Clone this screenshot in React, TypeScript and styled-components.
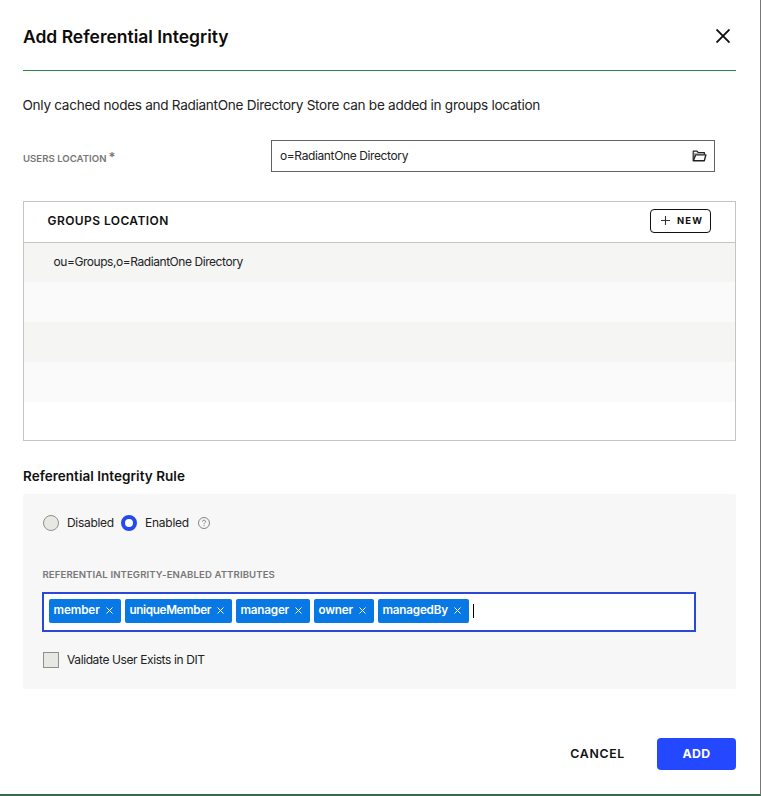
import React from 'react';
import styled, { createGlobalStyle } from 'styled-components';

const GlobalStyle = createGlobalStyle`
  *, *::before, *::after { box-sizing: border-box; }
  html, body { margin: 0; background: #fff; overflow: hidden; }
  button { font-family: inherit; padding: 0; margin: 0; background: none; border: 0; color: inherit; }
`;

const Dialog = styled.main`
  width: 761px;
  height: 796px;
  padding: 0 24px 0 23px;
  display: flex;
  flex-direction: column;
  background: #fff;
  border-right: 1px solid #777;
  border-bottom: 2px solid #356b48;
  font-family: Inter, 'Liberation Sans', sans-serif;
  color: #222;
  white-space: nowrap;
`;

const Header = styled.header`
  flex: none;
  height: 71px;
  display: flex;
  justify-content: space-between;
  align-items: flex-start;
  border-bottom: 1px solid #2b8a47;
`;

const Title = styled.h1`
  margin: 26px 0 0;
  font-size: 17.5px;
  line-height: 22px;
  font-weight: 600;
  letter-spacing: -0.01px;
  color: #0c0c0c;
`;

const CloseButton = styled.button`
  display: flex;
  margin: 29px 6px 0 0;
  color: #111;
`;

const Notice = styled.p`
  margin: 24px 0 0 -0.5px;
  font-size: 13.6px;
  line-height: 20px;
  letter-spacing: -0.3px;
`;

const FieldRow = styled.div`
  margin-top: 25px;
  display: flex;
  align-items: center;
  height: 32px;
`;

const Label = styled.label<{ $tracking: string }>`
  font-size: 9.6px;
  line-height: 14px;
  font-weight: 600;
  letter-spacing: ${(p) => p.$tracking};
  color: #777;
`;

const UsersLabel = styled(Label)`
  width: 248px;
  padding-top: 5px;
`;

const Required = styled.span`
  margin-left: 2px;
  font-size: 13px;
  line-height: 10px;
`;

const LocationInput = styled.div`
  width: 444px;
  height: 32px;
  padding: 0 7px 1px 8px;
  display: flex;
  align-items: center;
  justify-content: space-between;
  border: 1px solid #626265;
  font-size: 12px;
  letter-spacing: -0.38px;
`;

const Table = styled.section`
  flex: none;
  margin-top: 29px;
  height: 240px;
  border: 1px solid #c4c4c4;
`;

const TableHeader = styled.div`
  height: 41px;
  padding: 0 24px 0 23.5px;
  display: flex;
  align-items: center;
  justify-content: space-between;
  border-bottom: 1px solid #c4c4c4;
  font-size: 12px;
  font-weight: 600;
  letter-spacing: 0.42px;
  color: #111;
`;

const TableHeading = styled.span`
  margin-top: -3px;
`;

const NewButton = styled.button`
  width: 61px;
  height: 24px;
  margin-top: -3px;
  padding-left: 9px;
  display: flex;
  align-items: center;
  gap: 6px;
  border: 1px solid #111;
  border-radius: 4px;
  font-size: 9.4px;
  font-weight: 700;
  letter-spacing: 1.2px;
`;

const Row = styled.div<{ $shaded: boolean }>`
  height: 40px;
  padding: 0 30px 2px 29.5px;
  display: flex;
  align-items: center;
  background: ${(p) => (p.$shaded ? '#f5f5f4' : '#fafafa')};
  font-size: 12px;
  letter-spacing: -0.44px;

  &:nth-child(2) { height: 39px; }
`;

const SectionTitle = styled.h2`
  margin: 25px 0 0;
  font-size: 13.5px;
  line-height: 20px;
  font-weight: 600;
  letter-spacing: 0.04px;
  color: #111;
`;

const RulePanel = styled.section`
  flex: none;
  margin-top: 8px;
  height: 195px;
  padding: 20px 40px 0 19px;
  background: #f7f7f7;
  border-radius: 2px;
`;

const OptionRow = styled.div`
  display: flex;
  align-items: center;
  height: 18px;
  padding-left: 1px;
  font-size: 12px;
`;

const Option = styled.span<{ $width?: number; $tracking: string }>`
  width: ${(p) => (p.$width ? p.$width + 'px' : 'auto')};
  padding-bottom: 2px;
  letter-spacing: ${(p) => p.$tracking};
`;

const Radio = styled.span<{ $checked?: boolean }>`
  width: 16px;
  height: 16px;
  margin-right: 8px;
  border-radius: 50%;
  border: ${(p) => (p.$checked ? '4px solid #2649ee' : '1px solid #8f8f8c')};
  background: ${(p) => (p.$checked ? '#fff' : '#e8e8e2')};
`;

const Checkbox = styled.span`
  width: 16px;
  height: 16px;
  margin-right: 8px;
  border: 1px solid #8f8f8c;
  background: #e8e8e2;
`;

const AttributesLabel = styled(Label)`
  display: block;
  margin: 36px 0 0 0.5px;
`;

const TagInput = styled.div`
  width: 654px;
  height: 40px;
  margin: 10px 0 19px;
  padding: 5px;
  display: flex;
  align-items: flex-start;
  gap: 4px;
  border: 2px solid #2949d6;
  background: #fff;
`;

const Tag = styled.span<{ $width: number; $tracking: string }>`
  width: ${(p) => p.$width}px;
  height: 24px;
  padding: 0 8px 2px 4.5px;
  display: flex;
  align-items: center;
  justify-content: space-between;
  border-radius: 2px;
  background: #0878e4;
  color: #fff;
  font-size: 11.7px;
  font-weight: 600;
  letter-spacing: ${(p) => p.$tracking};
`;

const TagName = styled.span`
  padding-bottom: 1px;
`;

const Caret = styled.span`
  width: 1px;
  height: 14px;
  margin-top: 5px;
  background: #000;
`;

const Footer = styled.footer`
  margin-top: 49px;
  display: flex;
  justify-content: flex-end;
  align-items: center;
  gap: 32px;
`;

const CancelButton = styled.button`
  height: 32px;
  padding-bottom: 2px;
  font-size: 12.3px;
  font-weight: 600;
  letter-spacing: 0.7px;
  color: #111;
`;

const AddButton = styled.button`
  width: 79px;
  height: 32px;
  padding-bottom: 2px;
  border-radius: 4px;
  background: #2448ff;
  color: #fff;
  font-size: 12.3px;
  font-weight: 700;
  letter-spacing: 0.35px;
`;

const Cross = ({ size, weight }: { size: number; weight: number }) => (
  <svg width={size} height={size} viewBox={`0 0 ${size} ${size}`} fill="none" stroke="currentColor" strokeWidth={weight}>
    <path d={`M.5 .5 ${size - 0.5} ${size - 0.5}M${size - 0.5} .5 .5 ${size - 0.5}`} />
  </svg>
);

const FolderIcon = () => (
  <svg width="15" height="12" viewBox="0 0 15 12" fill="none" stroke="#222" strokeWidth="1.2" strokeLinejoin="round">
    <path d="M1.8 3V9L3.4 4.3H12.4V2.8H6.2Z" fill="#aaa" stroke="none" />
    <path d="M1.2 10.5V1.2H5l1.2 1.3h6.2V4.5" />
    <path d="M1.3 10.7 3.6 4.9h10.3l-1.6 5.8Z" fill="#fff" strokeWidth="1.4" />
  </svg>
);

const PlusIcon = () => (
  <svg width="11" height="11" viewBox="0 0 11 11" stroke="#333" strokeWidth="1.1">
    <path d="M5.5 1v9M1 5.5h9" />
  </svg>
);

const HelpIcon = () => (
  <svg width="12" height="12" viewBox="0 0 12 12" fill="none" stroke="#777" strokeWidth="0.9">
    <circle cx="6" cy="6" r="5.5" />
    <path d="M4.4 4.7c0-2 3.2-2 3.2-.1C7.6 5.8 6 5.8 6 7.2M6 8.1v1" />
  </svg>
);

const rows = ['ou=Groups,o=RadiantOne Directory', '', '', ''];

const tags = [
  { name: 'member', width: 72, tracking: '-0.1px' },
  { name: 'uniqueMember', width: 107, tracking: '-0.35px' },
  { name: 'manager', width: 74, tracking: '-0.2px' },
  { name: 'owner', width: 60, tracking: '-0.2px' },
  { name: 'managedBy', width: 91, tracking: '-0.2px' },
];

export default function App() {
  return (
    <>
      <GlobalStyle />
      <Dialog>
        <Header>
          <Title>Add Referential Integrity</Title>
          <CloseButton aria-label="Close">
            <Cross size={14} weight={1.9} />
          </CloseButton>
        </Header>
        <Notice>Only cached nodes and RadiantOne Directory Store can be added in groups location</Notice>
        <FieldRow>
          <UsersLabel $tracking="0.02px">
            USERS LOCATION<Required>*</Required>
          </UsersLabel>
          <LocationInput>
            <span>o=RadiantOne Directory</span>
            <FolderIcon />
          </LocationInput>
        </FieldRow>
        <Table>
          <TableHeader>
            <TableHeading>GROUPS LOCATION</TableHeading>
            <NewButton>
              <PlusIcon />
              NEW
            </NewButton>
          </TableHeader>
          {rows.map((row, i) => (
            <Row key={i} $shaded={i % 2 === 0}>{row}</Row>
          ))}
        </Table>
        <SectionTitle>Referential Integrity Rule</SectionTitle>
        <RulePanel>
          <OptionRow>
            <Radio />
            <Option $width={54} $tracking="-0.3px">Disabled</Option>
            <Radio $checked />
            <Option $width={53} $tracking="-0.25px">Enabled</Option>
            <HelpIcon />
          </OptionRow>
          <AttributesLabel $tracking="0.1px">REFERENTIAL INTEGRITY-ENABLED ATTRIBUTES</AttributesLabel>
          <TagInput>
            {tags.map((tag) => (
              <Tag key={tag.name} $width={tag.width} $tracking={tag.tracking}>
                <TagName>{tag.name}</TagName>
                <Cross size={7} weight={1} />
              </Tag>
            ))}
            <Caret />
          </TagInput>
          <OptionRow>
            <Checkbox />
            <Option $tracking="-0.39px">Validate User Exists in DIT</Option>
          </OptionRow>
        </RulePanel>
        <Footer>
          <CancelButton>CANCEL</CancelButton>
          <AddButton>ADD</AddButton>
        </Footer>
      </Dialog>
    </>
  );
}
